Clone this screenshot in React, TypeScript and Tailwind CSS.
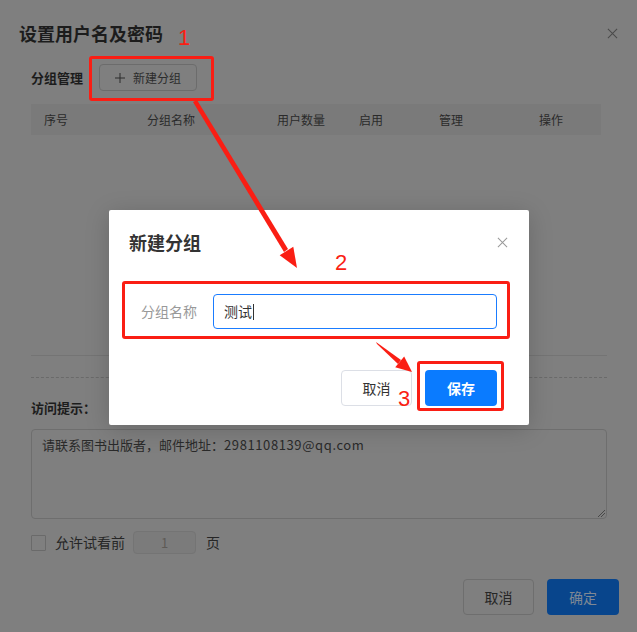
import React from "react"

// table columns of the group list
const columns = [
  { label: "序号", w: "w-[116px] pl-[13px]" },
  { label: "分组名称", w: "w-[130px]" },
  { label: "用户数量", w: "w-[82px]" },
  { label: "启用", w: "w-[80px]" },
  { label: "管理", w: "w-[100px]" },
  { label: "操作", w: "flex-1" },
]

function CloseIcon({ className }: { className?: string }) {
  return (
    <svg viewBox="0 0 12 12" className={className} fill="none" stroke="currentColor" strokeWidth="1.1">
      <path d="M1 1 L11 11 M11 1 L1 11" />
    </svg>
  )
}

// the dimmed dialog underneath
function BackDialog() {
  return (
    <div className="flex flex-col">
      <div className="flex items-center justify-between pl-[19px] pr-[19px] pt-[22px]">
        <h1 className="text-[18px] leading-[22px] font-bold text-[#1c1c1c]">设置用户名及密码</h1>
        <CloseIcon className="w-[11px] h-[11px] text-[#4a4a4a]" />
      </div>

      <div className="px-[31px] flex flex-col">
        <div className="mt-[20px] flex items-center h-[27px]">
          <span className="text-[13px] font-bold text-[#1c1c1c] w-[68px]">分组管理</span>
          <button className="h-[27px] w-[98px] border border-[#6c6c6c] rounded-[4px] flex items-center justify-center gap-[8px] text-[12px] text-[#2c2c2c]">
            <svg viewBox="0 0 10 10" className="w-[10px] h-[10px]" stroke="#2c2c2c" strokeWidth="1">
              <path d="M5 0 V10 M0 5 H10" />
            </svg>
            <span>新建分组</span>
          </button>
        </div>

        <div className="mt-[13px] w-[570px] h-[31px] bg-[#7a7a7a] flex items-center text-[12px] text-[#2a2a2a]">
          {columns.map((c) => (
            <div key={c.label} className={c.w}>
              {c.label}
            </div>
          ))}
        </div>

        <div className="mt-[220px] w-[576px] border-t border-[#747474]" />
        <div className="mt-[21px] w-[576px] border-t border-dashed border-[#6a6a6a]" />

        <div className="mt-[20px] text-[13px] leading-[20px] font-bold text-[#1c1c1c]">访问提示：</div>

        <div className="mt-[11px] w-[576px] h-[90px] border border-[#6e6e6e] rounded-[4px] relative px-[10px] py-[5px] text-[13px] text-[#2a2a2a]">
          请联系图书出版者，邮件地址：<span className="tracking-[0.6px]">2981108139@qq.com</span>
          <svg viewBox="0 0 8 8" className="absolute right-[1px] bottom-[1px] w-[8px] h-[8px]" stroke="#3a3a3a" strokeWidth="0.8">
            <path d="M1 8 L8 1 M4 8 L8 4" />
          </svg>
        </div>

        <div className="mt-[12px] h-[23px] flex items-center">
          <span className="w-[15px] h-[16px] border border-[#6a6a6a] rounded-[1px]" />
          <span className="ml-[9px] text-[14px] text-[#262626]">允许试看前</span>
          <span className="ml-[8px] w-[63px] h-[23px] bg-[#7b7b7b] border border-[#747474] rounded-[4px] flex items-center justify-center text-[13px] text-[#5e5a56]">
            1
          </span>
          <span className="ml-[10px] text-[14px] text-[#262626]">页</span>
        </div>
      </div>

      <div className="mt-[25px] pr-[18px] flex justify-end gap-[13px]">
        <button className="w-[71px] h-[36px] border border-[#6e6e6e] rounded-[4px] text-[14px] text-[#262626]">取消</button>
        <button className="w-[72px] h-[36px] bg-[#08458c] rounded-[4px] text-[14px] text-[#7f8894]">确定</button>
      </div>
    </div>
  )
}

function NewGroupModal() {
  return (
    <div className="absolute left-[109px] top-[210px] w-[420px] h-[215px] bg-white rounded-[2px] shadow-[0_4px_24px_rgba(0,0,0,0.18)] flex flex-col">
      <div className="pt-[20px] pl-[20px] pr-[21px] flex items-center justify-between">
        <h2 className="text-[18px] leading-[24px] font-bold text-[#333]">新建分组</h2>
        <CloseIcon className="w-[11px] h-[11px] text-[#999]" />
      </div>
      <div className="mt-[40px] px-[32px] flex items-center">
        <label className="w-[72px] text-[14px] text-[#999]">分组名称</label>
        <div className="flex-1 h-[35px] border border-[#1a7cff] rounded-[4px] flex items-center px-[10px] text-[14px] text-[#333]">
          测试<span className="ml-[1px] w-[1px] h-[16px] bg-[#333]" />
        </div>
      </div>
      <div className="mt-[41px] px-[32px] flex justify-end gap-[13px]">
        <button className="w-[71px] h-[36px] border border-[#dcdfe6] rounded-[4px] text-[14px] text-[#333]">取消</button>
        <button className="w-[72px] h-[36px] bg-[#0a7bff] rounded-[4px] text-[14px] font-bold text-white">保存</button>
      </div>
    </div>
  )
}

// red annotation marks drawn over the screenshot
function Annotations() {
  return (
    <>
      <div className="absolute left-[89px] top-[56px] w-[125px] h-[45px] border-[3px] border-[#fa1e14] rounded-[3px]" />
      <div className="absolute left-[122px] top-[281px] w-[388px] h-[58px] border-[3px] border-[#fa1e14] rounded-[3px]" />
      <div className="absolute left-[417px] top-[361px] w-[87px] h-[50px] border-[3px] border-[#fa1e14] rounded-[3px]" />

      <span className="absolute left-[178px] top-[25px] text-[22px] leading-[26px] text-[#fa1e14] font-['Liberation_Sans',sans-serif]">1</span>
      <span className="absolute left-[335px] top-[250px] text-[22px] leading-[26px] text-[#fa1e14] font-['Liberation_Sans',sans-serif]">2</span>
      <span className="absolute left-[398px] top-[386px] text-[22px] leading-[26px] text-[#fa1e14] font-['Liberation_Sans',sans-serif]">3</span>

      <svg className="absolute inset-0 pointer-events-none" width="637" height="632">
        <polygon points="193,102 197,100 288,249 284,252" fill="#fa1e14" />
        <polygon points="297,268 279.7,255.2 293.3,246.8" fill="#fa1e14" />
        <polygon points="376,342 377,344 398,364 401,360" fill="#fa1e14" />
        <polygon points="412,372 395.2,367.2 404.2,356.4" fill="#fa1e14" />
      </svg>
    </>
  )
}

export default function App() {
  return (
    <div className="relative w-[637px] h-[632px] overflow-hidden bg-[#7f7f7f] font-['Noto_Sans_CJK_SC','Noto_Sans',sans-serif]">
      <BackDialog />
      <NewGroupModal />
      <Annotations />
    </div>
  )
}
